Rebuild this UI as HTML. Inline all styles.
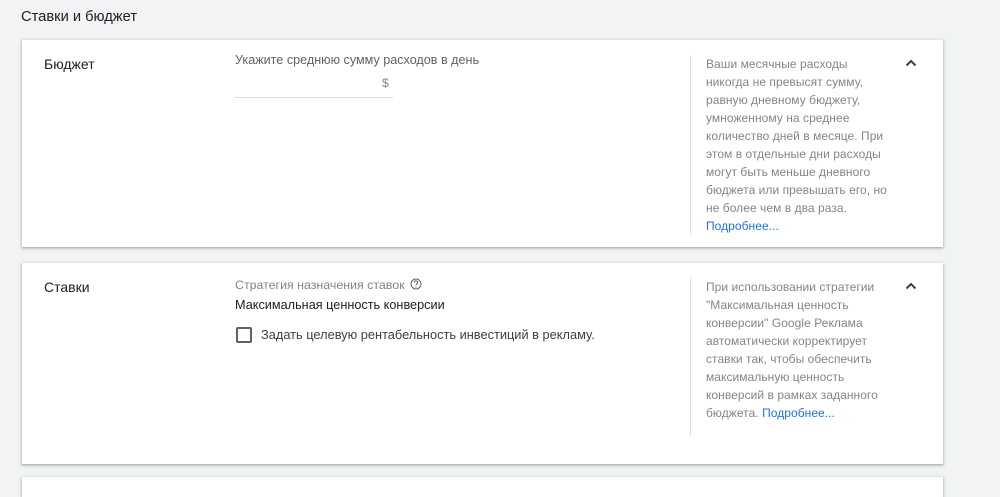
<!DOCTYPE html>
<html><head><meta charset="utf-8"><style>
*{margin:0;padding:0;box-sizing:border-box}
html,body{width:1000px;height:480px}
body{background:#f1f3f4;font-family:"Liberation Sans",sans-serif;position:relative;overflow:hidden;color:#202124}
.t{position:absolute;white-space:nowrap}
.card{position:absolute;left:22px;width:921px;background:#fff;box-shadow:0 1px 2px rgba(60,64,67,.3),0 1px 3px 1px rgba(60,64,67,.15)}
.side{position:absolute;left:668px;border-left:1px solid #dadce0;padding-left:15px;font-size:12px;line-height:18px;color:#80868b;width:200px;white-space:nowrap;letter-spacing:0.05px}
.side a{color:#1a73e8;text-decoration:none}
.chev{position:absolute;left:883px}
</style></head><body>
<div class="t" style="left:21px;top:9px;font-size:14.7px">Ставки и бюджет</div>

<div class="card" style="top:40px;height:207px">
  <div class="t" style="left:22px;top:16px;font-size:14px">Бюджет</div>
  <div class="t" style="left:213px;top:13px;font-size:12.6px;color:#5f6368">Укажите среднюю сумму расходов в день</div>
  <div class="t" style="left:360px;top:36px;font-size:12px;color:#80868b">$</div>
  <div style="position:absolute;left:213px;top:57px;width:158px;height:1px;background:#dadce0"></div>
  <div class="side" style="top:15px;height:179px">Ваши месячные расходы<br>никогда не превысят сумму,<br>равную дневному бюджету,<br>умноженному на среднее<br>количество дней в месяце. При<br>этом в отдельные дни расходы<br>могут быть меньше дневного<br>бюджета или превышать его, но<br>не более чем в два раза.<br><a>Подробнее...</a></div>
  <svg class="chev" style="top:18px" width="12" height="10" viewBox="0 0 12 10"><path d="M1.5 7.5L6 3l4.5 4.5" fill="none" stroke="#3c4043" stroke-width="2"/></svg>
</div>

<div class="card" style="top:263px;height:201px">
  <div class="t" style="left:22px;top:16px;font-size:14px">Ставки</div>
  <div class="t" style="left:213px;top:15px;font-size:12.4px;color:#80868b">Стратегия назначения ставок <svg width="12" height="12" viewBox="0 0 12 12" style="vertical-align:-1px;margin-left:2px"><circle cx="6" cy="6" r="5" fill="none" stroke="#5f6368" stroke-width="1"/><path d="M4.3 4.6a1.7 1.7 0 1 1 2.4 1.5c-.5.3-.7.6-.7 1.2" fill="none" stroke="#5f6368" stroke-width="1"/><circle cx="6" cy="9" r=".6" fill="#5f6368"/></svg></div>
  <div class="t" style="left:213px;top:35px;font-size:12.7px">Максимальная ценность конверсии</div>
  <div style="position:absolute;left:214px;top:64px;width:16px;height:16px;border:2px solid #5f6368;border-radius:2px"></div>
  <div class="t" style="left:239px;top:64px;font-size:12.8px;color:#3c4043">Задать целевую рентабельность инвестиций в рекламу.</div>
  <div class="side" style="top:15px;height:157px">При использовании стратегии<br>"Максимальная ценность<br>конверсии" Google Реклама<br>автоматически корректирует<br>ставки так, чтобы обеспечить<br>максимальную ценность<br>конверсий в рамках заданного<br>бюджета. <a>Подробнее...</a></div>
  <svg class="chev" style="top:18px" width="12" height="10" viewBox="0 0 12 10"><path d="M1.5 7.5L6 3l4.5 4.5" fill="none" stroke="#3c4043" stroke-width="2"/></svg>
</div>

<div class="card" style="top:477px;height:20px"></div>
</body></html>
